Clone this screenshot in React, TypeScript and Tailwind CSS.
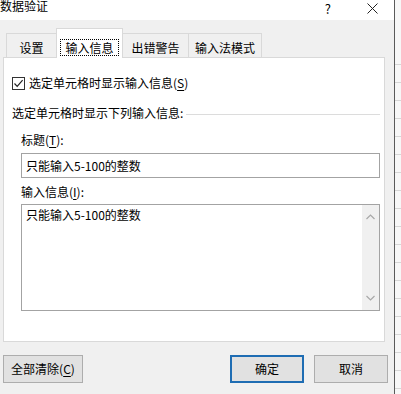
import React from "react";

function U({ c }: { c: string }) {
  return <span className="underline underline-offset-[2px]">{c}</span>;
}

export default function App() {
  const rows = Array.from({ length: 22 });
  return (
    <div className="w-[401px] h-[394px] flex overflow-hidden bg-[#f0f0f0] text-[12px] leading-[16px] text-black font-['Noto_Sans_CJK_SC',sans-serif]">
      <div className="w-[395px] h-full flex flex-col border-r border-[#5a5a5a] shrink-0">
        {/* title bar */}
        <div className="h-[20px] bg-white flex items-start shrink-0">
          <span className="leading-[12px]">数据验证</span>
          <div className="flex-1" />
          <span className="mt-[1px] text-[13px] mr-[36px]">?</span>
          <svg width="11" height="11" viewBox="0 0 11 11" className="mt-[3px] mr-[16px]">
            <path d="M0.5 0.5 L10.5 10.5 M10.5 0.5 L0.5 10.5" stroke="#222" strokeWidth="1" />
          </svg>
        </div>
        {/* body */}
        <div className="flex-1 flex flex-col pl-[3px]">
          {/* tabs */}
          <div className="h-[29px] mt-[8px] flex items-end pl-[3px] shrink-0">
            <div className="w-[50px] h-[24px] border-l border-t border-[#d9d9d9] bg-[#f0f0f0] text-center pt-[6px]">设置</div>
            <div className="relative z-10 w-[67px] h-[30px] mb-[-1px] border-l border-t border-r border-[#d9d9d9] bg-white flex justify-center pt-[10px]">
              <span className="h-[17px] border border-dotted border-black px-[4px] leading-[15px]">输入信息</span>
            </div>
            <div className="w-[65px] h-[24px] border-t border-[#d9d9d9] bg-[#f0f0f0] text-center pt-[6px]">出错警告</div>
            <div className="w-[74px] h-[24px] border-l border-t border-r border-[#d9d9d9] bg-[#f0f0f0] text-center pt-[6px]">输入法模式</div>
          </div>
          {/* panel */}
          <div className="w-[382px] h-[285px] border border-[#d9d9d9] bg-white flex flex-col pl-[8px] pt-[17px] shrink-0">
            <div className="flex items-center h-[16px]">
              <div className="w-[13px] h-[13px] border border-[#333] bg-white flex items-center justify-center">
                <svg width="11" height="11" viewBox="0 0 11 11">
                  <path d="M1.5 5.5 L4.2 8.3 L9.6 2.2" fill="none" stroke="#222" strokeWidth="1.2" />
                </svg>
              </div>
              <span className="ml-[4px]">选定单元格时显示输入信息(<U c="S" />)</span>
            </div>
            <div className="flex items-center h-[16px] mt-[14px]">
              <span>选定单元格时显示下列输入信息:</span>
              <div className="flex-1 h-px bg-[#dcdcdc] ml-[3px] mr-[4px] mt-[2px]" />
            </div>
            <div className="ml-[9px] flex flex-col">
              <div className="h-[16px] mt-[11px]">标题(<U c="T" />):</div>
              <div className="w-[359px] h-[25px] mt-[5px] border border-[#a3a3a3] bg-white pl-[4px] flex items-center">
                只能输入5-100的整数
              </div>
              <div className="h-[16px] mt-[6px]">输入信息(<U c="I" />):</div>
              <div className="w-[359px] h-[107px] mt-[4px] border border-[#a3a3a3] bg-white flex">
                <div className="flex-1 pl-[4px] pt-[2px]">只能输入5-100的整数</div>
                <div className="w-[17px] h-full bg-[#f0f0f0] flex flex-col items-center justify-between py-[9px]">
                  <svg width="9" height="6" viewBox="0 0 9 6">
                    <path d="M0.5 5 L4.5 1 L8.5 5" fill="none" stroke="#a8a8a8" strokeWidth="1.2" />
                  </svg>
                  <svg width="9" height="6" viewBox="0 0 9 6">
                    <path d="M0.5 1 L4.5 5 L8.5 1" fill="none" stroke="#a8a8a8" strokeWidth="1.2" />
                  </svg>
                </div>
              </div>
            </div>
          </div>
          {/* buttons */}
          <div className="flex mt-[13px] h-[28px] pr-[6px]">
            <div className="w-[80px] h-[28px] border border-[#adadad] bg-[#e1e1e1] flex items-center justify-center">
              全部清除(<U c="C" />)
            </div>
            <div className="flex-1" />
            <div className="w-[74px] h-[28px] border-2 border-[#1f6db3] bg-[#e1e1e1] flex items-center justify-center">
              确定
            </div>
            <div className="w-[74px] h-[28px] ml-[10px] border border-[#adadad] bg-[#e1e1e1] flex items-center justify-center">
              取消
            </div>
          </div>
        </div>
      </div>
      {/* excel strip */}
      <div className="flex-1 flex flex-col bg-[#f7f7f7] pt-[47px]">
        {rows.map((_, i) => (
          <div key={i} className="h-[18px] border-b border-[#d6d6d6] shrink-0" />
        ))}
      </div>
    </div>
  );
}
